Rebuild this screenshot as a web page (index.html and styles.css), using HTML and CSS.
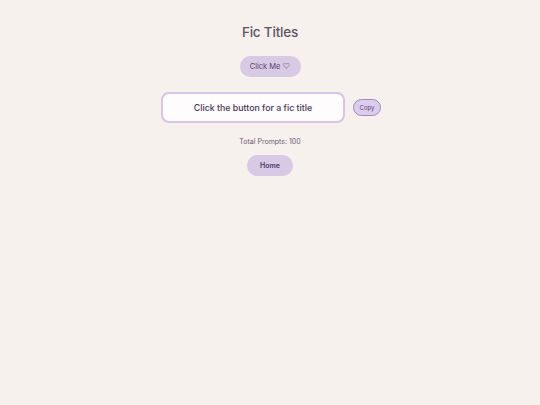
FILE: index.html
```html
<!DOCTYPE html>
<html>
<head>
<meta charset="utf-8">
<link rel="stylesheet" href="styles.css">
</head>
<body>
<main class="page">
  <h1 class="title">Fic Titles</h1>
  <button class="btn click-btn">Click Me <span class="heart">♡</span></button>
  <div class="result-row">
    <div class="result-box">Click the button for a fic title</div>
    <button class="copy-btn">Copy</button>
  </div>
  <p class="total">Total Prompts: 100</p>
  <button class="btn home-btn">Home</button>
</main>
</body>
</html>
```
FILE: styles.css
```css
html, body {
  margin: 0;
  padding: 0;
  background: #f6f1ec;
  font-family: "Inter", "Noto Sans", sans-serif;
}
.page {
  display: flex;
  flex-direction: column;
  align-items: center;
  padding-top: 22px;
}
.title {
  margin: 0;
  font-size: 13.5px;
  font-weight: 500;
  letter-spacing: -0.2px;
  color: #5e5468;
  line-height: 20px;
}
.btn {
  border: none;
  border-radius: 12px;
  background: #d8c9e4;
  font-family: inherit;
  color: #5a4370;
  cursor: pointer;
}
.click-btn {
  margin-top: 14px;
  width: 61px;
  height: 21px;
  font-size: 7.5px;
  font-weight: 400;
  padding: 0;
}
.heart {
  color: #9c88b0;
}
.result-row {
  margin-top: 15px;
  display: flex;
  align-items: center;
  gap: 8px;
  margin-left: 2px;
}
.result-box {
  width: 180px;
  height: 27px;
  border: 2px solid #d6c5e6;
  border-radius: 8px;
  background: #fefcfd;
  display: flex;
  align-items: center;
  justify-content: center;
  font-size: 8.8px;
  font-weight: 500;
  color: #4a3558;
}
.copy-btn {
  width: 28px;
  height: 17px;
  padding: 0;
  border: 1px solid #a08ab8;
  border-radius: 9px;
  background: #dccdef;
  font-family: inherit;
  font-size: 6px;
  color: #5a4370;
}
.total {
  margin: 14px 0 0;
  font-size: 7px;
  font-weight: 400;
  color: #6a5c78;
  line-height: 10px;
}
.home-btn {
  margin-top: 8px;
  width: 46px;
  height: 21px;
  font-size: 7px;
  font-weight: 600;
  padding: 0;
  color: #4e3866;
}
```
